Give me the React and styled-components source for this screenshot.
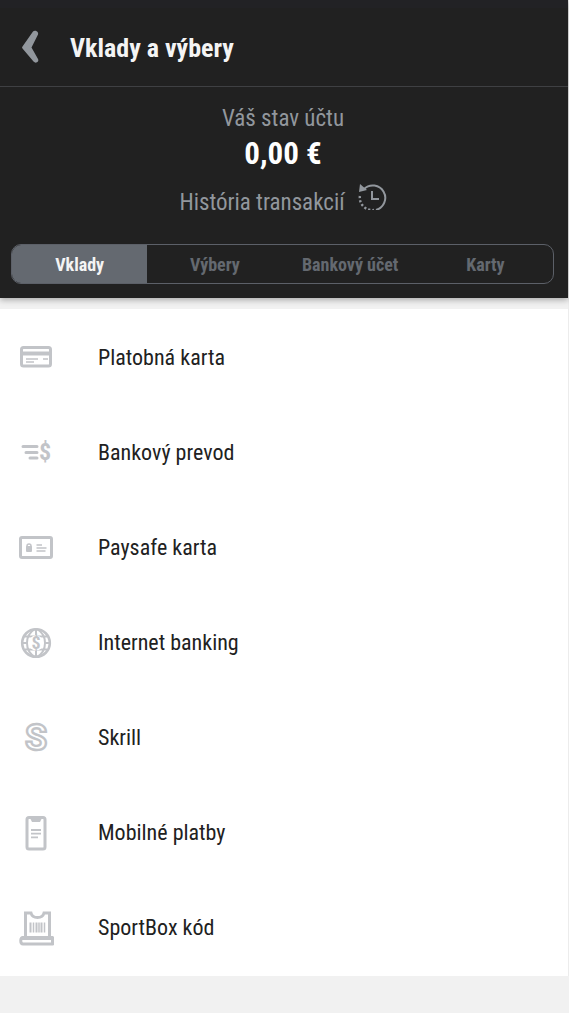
import React, { useState } from 'react';
import styled, { createGlobalStyle, css } from 'styled-components';

const colors = {
  dark: '#212121',
  line: '#3f4043',
  border: '#5c6068',
  active: '#646970',
  muted: '#92979d',
  icon: '#c2c4c8',
  page: '#f1f1f1',
};

const fontFamily = '"Roboto Condensed", Roboto, sans-serif';

const GlobalStyle = createGlobalStyle`
  * {
    box-sizing: border-box;
  }
  body {
    margin: 0;
    background: ${colors.page};
    font-family: ${fontFamily};
  }
  button {
    font-family: inherit;
    cursor: pointer;
  }
`;

const Page = styled.div`
  border-right: 1px solid #ececec;
`;

const Top = styled.header`
  background: ${colors.dark};
  border-top: 8px solid #222225;
  box-shadow: 0 2px 6px rgba(0, 0, 0, 0.3);
`;

const TitleBar = styled.div`
  display: flex;
  align-items: center;
  height: 79px;
  padding: 0 20px;
  gap: 30px;
  border-bottom: 1px solid ${colors.line};
`;

const BackButton = styled.button`
  display: flex;
  padding: 0;
  border: 0;
  background: none;
  color: ${colors.muted};
`;

const Title = styled.h1`
  margin: 0;
  padding-top: 2px;
  font-size: 26px;
  line-height: 32px;
  font-weight: 700;
  color: #f4f4f4;
`;

const Account = styled.section`
  display: flex;
  flex-direction: column;
  align-items: center;
  padding: 16px 2px 22px 0;
`;

const Label = styled.span`
  font-size: 23px;
  line-height: 32px;
  color: ${colors.muted};
`;

const Balance = styled.strong`
  font-size: 31px;
  line-height: 38px;
  font-weight: 700;
  color: #fff;
`;

const HistoryLink = styled.a`
  display: flex;
  align-items: center;
  gap: 12px;
  padding-top: 11px;
  color: ${colors.muted};
  text-decoration: none;
  svg {
    margin-bottom: 12px;
  }
`;

const Tabs = styled.nav`
  padding: 0 14px 14px 11px;
`;

const TabGroup = styled.div`
  display: grid;
  grid-template-columns: repeat(4, 1fr);
  height: 40px;
  border: 1px solid ${colors.border};
  border-radius: 10px;
  overflow: hidden;
`;

const Tab = styled.button`
  padding: 0;
  border: 0;
  background: none;
  font-size: 18px;
  font-weight: 700;
  color: ${colors.active};
  ${props => props.$active && css`
    background: ${colors.active};
    color: #f4f4f4;
  `}
`;

const Methods = styled.ul`
  list-style: none;
  margin: 11px 0 0;
  padding: 1px 0;
  background: #fff;
`;

const Method = styled.button`
  display: flex;
  align-items: center;
  width: 100%;
  height: 95px;
  padding: 0 18px;
  gap: 44px;
  border: 0;
  background: none;
  text-align: left;
  font-size: 22px;
  color: #212121;
`;

const Icon = styled.svg`
  flex: none;
  width: 36px;
  height: 36px;
  overflow: visible;
  fill: none;
  stroke: ${colors.icon};
  stroke-width: 3;
`;

const Glyph = styled.text`
  font-family: ${fontFamily};
  font-weight: 700;
  font-size: ${props => props.$size}px;
  text-anchor: middle;
  fill: ${colors.icon};
  stroke: none;
`;

const OutlineGlyph = styled(Glyph)`
  font-family: Roboto, sans-serif;
  fill: #fff;
  stroke: ${colors.icon};
  stroke-width: 2.4;
`;

const CardIcon = () => (
  <Icon viewBox="0 0 36 36">
    <rect x="3.5" y="7.5" width="29" height="18.5" rx="2" />
    <path d="M3 13.5h30" strokeWidth="4" />
    <path d="M8 19h12M25 19h5M8 22h8" strokeWidth="1.6" />
  </Icon>
);

const TransferIcon = () => (
  <Icon viewBox="0 0 36 36">
    <path d="M5 11.5h14M8 17.5h11M12 23h7" strokeLinecap="round" />
    <Glyph x="27" y="25" $size="24">$</Glyph>
  </Icon>
);

const PaysafeIcon = () => (
  <Icon viewBox="0 0 36 36">
    <rect x="2.5" y="7.5" width="31" height="20" rx="1.5" />
    <path d="M9 17v-1a2 2 0 0 1 4 0v1" strokeWidth="1.5" />
    <rect x="8" y="16" width="6" height="6" rx="1" fill={colors.icon} stroke="none" />
    <path d="M18.5 15h5.5M18.5 18h10M18.5 21h9" strokeWidth="1.6" />
  </Icon>
);

const GlobeIcon = () => (
  <Icon viewBox="0 0 36 36">
    <circle cx="18" cy="18" r="13.8" strokeWidth="2.6" />
    <path
      d="M17 4c-5 3-8 8-8 14s3 11 8 14M19 4c5 3 8 8 8 14s-3 11-8 14M18 4v6M18 26v6M7 11.5h22M4 18h6M26 18h6M7 24.5h22"
      strokeWidth="2"
    />
    <circle cx="18" cy="18" r="7.5" fill="#fff" stroke="none" />
    <Glyph x="18" y="24" $size="18">$</Glyph>
  </Icon>
);

const SkrillIcon = () => (
  <Icon viewBox="0 0 36 36">
    <OutlineGlyph x="18" y="30" $size="36">S</OutlineGlyph>
  </Icon>
);

const PhoneIcon = () => (
  <Icon viewBox="0 0 36 36">
    <rect x="9" y="2.5" width="18" height="31.5" rx="2" />
    <path d="M12 3h12l-2 4h-8z" fill={colors.icon} stroke="none" />
    <path d="M13 15h10M13 18.700h10M13 22.300h7" strokeWidth="1.8" />
  </Icon>
);

const SportBoxIcon = () => (
  <Icon viewBox="0 0 36 36">
    <path d="M7.5 27V3h5.500c1.500 6 11.500 6 13 0h5.500v24" />
    <path d="M35.5 27.500H5c-3 0-3 6.500 0 6.500h30.500" />
    <path d="M34.5 27v8" />
    <path d="M4 28h31" strokeWidth="4" />
    <path d="M12.5 12.500v10M18.500 12.500v10M23.500 12.500v10" strokeWidth="2" />
    <path d="M15.5 12.500v10M21 12.500v10M26.500 12.500v10" strokeWidth="1.5" />
  </Icon>
);

const BackIcon = () => (
  <svg width="20" height="36" viewBox="0 0 20 36" aria-hidden="true">
    <path
      d="M13 2.500c2-2 6 0 5 3L11.500 18.500l6.500 11.500c1.500 3-2.500 5-4.500 2.500L2.500 19.500q-1-1 0-2z"
      fill="currentColor"
    />
  </svg>
);

const HistoryIcon = () => (
  <svg width="30" height="26" viewBox="0 0 30 26" fill="none" stroke="currentColor" strokeWidth="2">
    <path d="M7 5A12.500 12.500 0 1 1 19 26" />
    <path d="M3 0L2 8l8-2z" fill="currentColor" stroke="none" />
    <path d="M15 7v8h7" />
    <path d="M2.900 12A12.500 12.500 0 0 0 17 26" strokeWidth="2.4" strokeDasharray="2.2 2" />
  </svg>
);

const tabs = ['Vklady', 'Výbery', 'Bankový účet', 'Karty'];

const methods = [
  { name: 'Platobná karta', icon: CardIcon },
  { name: 'Bankový prevod', icon: TransferIcon },
  { name: 'Paysafe karta', icon: PaysafeIcon },
  { name: 'Internet banking', icon: GlobeIcon },
  { name: 'Skrill', icon: SkrillIcon },
  { name: 'Mobilné platby', icon: PhoneIcon },
  { name: 'SportBox kód', icon: SportBoxIcon },
];

const App = () => {
  const [active, setActive] = useState('Vklady');

  return (
    <Page>
      <GlobalStyle />
      <Top>
        <TitleBar>
          <BackButton type="button" aria-label="Späť">
            <BackIcon />
          </BackButton>
          <Title>Vklady a výbery</Title>
        </TitleBar>
        <Account>
          <Label>Váš stav účtu</Label>
          <Balance>0,00 €</Balance>
          <HistoryLink href="#historia">
            <Label>História transakcií</Label>
            <HistoryIcon />
          </HistoryLink>
        </Account>
        <Tabs>
          <TabGroup>
            {tabs.map(tab => (
              <Tab
                key={tab}
                type="button"
                $active={tab === active}
                aria-pressed={tab === active}
                onClick={() => setActive(tab)}
              >
                {tab}
              </Tab>
            ))}
          </TabGroup>
        </Tabs>
      </Top>
      <Methods>
        {methods.map(({ name, icon: MethodIcon }) => (
          <li key={name}>
            <Method type="button">
              <MethodIcon />
              {name}
            </Method>
          </li>
        ))}
      </Methods>
    </Page>
  );
};

export default App;
